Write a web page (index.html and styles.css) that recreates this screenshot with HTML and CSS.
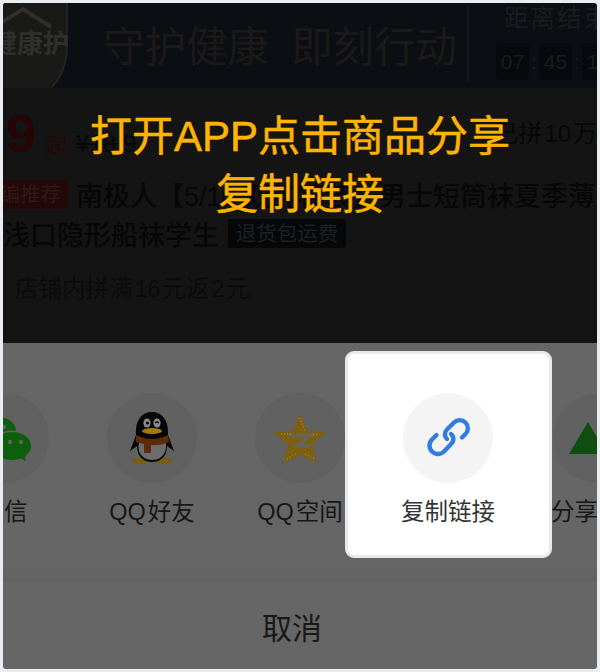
FILE: index.html
```html
<!DOCTYPE html>
<html lang="zh-CN">
<head>
    <meta charset="UTF-8">
    <meta name="viewport" content="width=device-width, initial-scale=1.0">
    <title>复制链接</title>
    <link rel="stylesheet" href="styles.css">
</head>
<body>

<div class="screen">
    <header class="banner">
        <div class="shield">
            <svg width="65" height="85" viewBox="0 0 65 85">
                <path d="M-10 0H64V45Q63 70 48 85H-10Z" fill="#191918"/>
                <path d="M-2 20L20 6L48 24" fill="none" stroke="#302f2c" stroke-width="4"/>
                <path d="M64 0V45Q63 70 48 85" fill="none" stroke="#232321" stroke-width="2"/>
            </svg>
            <span class="shield-text">健康护</span>
        </div>
        <div class="slogan">守护健康<span class="slogan-gap"></span>即刻行动</div>
        <div class="countdown">
            <div class="countdown-title">距离结束</div>
            <div class="countdown-time">
                <span class="time-box">07</span><span class="time-sep">:</span><span class="time-box">45</span><span class="time-sep">:</span><span class="time-box">16</span>
            </div>
        </div>
    </header>

    <section class="product">
        <div class="price-row">
            <span class="price">9</span>
            <span class="price-unit">起</span>
            <span class="price-old">¥18.9</span>
            <span class="sold">已拼&#8202;10&#8202;万</span>
        </div>
        <div class="title-row first">
            <span class="tag tag-red">编推荐</span>
            <span class="title-line">南极人【5/10 双纯棉装】男士短筒袜夏季薄</span>
        </div>
        <div class="title-row second">
            <span class="title-line">浅口隐形船袜学生</span>
            <span class="tag tag-dark">退货包运费</span>
        </div>
        <div class="promo">店铺内拼满&#8202;16&#8202;元返&#8202;2&#8202;元</div>
    </section>

    <section class="sheet">
        <div class="share-row">
            <div class="share-item">
                <div class="share-icon">
                    <svg width="60" height="50" viewBox="0 0 60 50">
                        <ellipse cx="24" cy="18" rx="18" ry="14" fill="#0d5f0d"/>
                        <ellipse cx="38" cy="33" rx="21" ry="15.5" fill="#616161"/>
                        <ellipse cx="38" cy="33" rx="19" ry="14" fill="#0d5f0d"/>
                        <path d="M44 44L52 48L50 40Z" fill="#0d5f0d"/>
                        <circle cx="36" cy="29" r="2.2" fill="#5c655c"/>
                        <circle cx="47" cy="29" r="2.2" fill="#5c655c"/>
                        <circle cx="30" cy="14" r="2.2" fill="#5c655c"/>
                    </svg>
                </div>
                <div class="share-label">微信</div>
            </div>
            <div class="share-item">
                <div class="share-icon">
                    <svg width="46" height="54" viewBox="0 0 46 54">
                        <ellipse cx="11" cy="50" rx="8" ry="3" fill="#7c5c10"/>
                        <ellipse cx="35" cy="50" rx="8" ry="3" fill="#7c5c10"/>
                        <path d="M7 24C6 8 14 1 23 1S40 8 39 24L45 40L38 35C38 45 32 51 23 51S8 45 8 35L1 40Z" fill="#060606"/>
                        <path d="M11 30H36C39 36 36 49 23 49C11 49 7 37 11 30Z" fill="#6c6c6c"/>
                        <ellipse cx="18" cy="12" rx="3.6" ry="4.6" fill="#8a8a8a"/>
                        <ellipse cx="28" cy="12" rx="3.6" ry="4.6" fill="#8a8a8a"/>
                        <circle cx="18.5" cy="12" r="1.6" fill="#060606"/>
                        <path d="M26 12Q28 10 30 12" fill="none" stroke="#060606" stroke-width="1.2"/>
                        <ellipse cx="23" cy="20" rx="10" ry="3" fill="#a6790f"/>
                        <path d="M7 24Q23 32 39 24L40 31Q30 35 22 34V42H15V33L7 31Z" fill="#5e2c0a"/>
                    </svg>
                </div>
                <div class="share-label">QQ&#8202;好友</div>
            </div>
            <div class="share-item">
                <div class="share-icon">
                    <svg width="54" height="50" viewBox="0 0 54 50">
                        <path d="M27 0L34 17L54 19L39 31L44 50L27 42L10 50L15 31L0 19L20 17Z" fill="#7d5f12"/>
                        <path d="M15 22H38L24 33H37" fill="none" stroke="#67645c" stroke-width="3.5"/>
                        <path d="M27 5L32 18M8 21H20M40 22L46 21M14 46L24 40M32 41L42 46" stroke="#ad8a1c" stroke-width="1.5" stroke-dasharray="1 2"/>
                    </svg>
                </div>
                <div class="share-label">QQ&#8202;空间</div>
            </div>
            <div class="share-item current">
                <div class="share-icon">
                    <svg width="46" height="46" viewBox="0 0 46 46" fill="none" stroke="#2f7de1" stroke-width="4.4" stroke-linecap="round">
                        <path d="M37 22.5l3.5-3.5a8 8 0 0 0-11.5-11.5l-7 7a6.5 6.5 0 0 0 0 9.5"/>
                        <path d="M26 19a6.5 6.5 0 0 1 0 10l-7 7.5a8 8 0 0 1-12-12l4.5-4.5"/>
                    </svg>
                </div>
                <div class="share-label">复制链接</div>
            </div>
            <div class="share-item last">
                <div class="share-icon">
                    <svg class="share-triangle" width="38" height="32" viewBox="0 0 38 32"><path d="M19 0L38 32H0Z" fill="#104d10"/></svg>
                </div>
                <div class="share-label">分享图片</div>
            </div>
        </div>
        <div class="cancel">取消</div>
    </section>

    <div class="callout">打开APP点击商品分享<br>复制链接</div>
</div>

</body>
</html>
```

FILE: styles.css
```css
body {
    margin: 0;
    padding: 3px;
    background-color: #e9edf2;
    font-family: "Liberation Sans", "Noto Sans CJK SC", sans-serif;
}

.screen {
    position: relative;
    height: 666px;
    overflow: hidden;
    border-radius: 3px;
    display: flex;
    flex-direction: column;
}

/* banner */
.banner {
    display: flex;
    height: 85px;
    flex-shrink: 0;
    background-color: #0b0e12;
}

.shield {
    position: relative;
    width: 65px;
    height: 85px;
    flex-shrink: 0;
}

.shield-text {
    position: absolute;
    top: 26px;
    left: -12px;
    font-size: 26px;
    line-height: 30px;
    font-weight: bold;
    white-space: nowrap;
    color: #2f2f2c;
}

.slogan {
    display: flex;
    align-items: center;
    width: 401px;
    flex-shrink: 0;
    padding-left: 35px;
    box-sizing: border-box;
    font-size: 41.5px;
    color: #1c1a18;
    white-space: nowrap;
    border-right: 2px solid #15171a;
    margin: 2px 0 6px;
}

.slogan-gap {
    width: 22px;
}

.countdown {
    padding: 1px 0 0 27px;
    white-space: nowrap;
}

.countdown-title {
    margin-left: 8px;
    font-size: 24.5px;
    line-height: 30px;
    letter-spacing: 2px;
    color: #1b1c1d;
}

.countdown-time {
    display: flex;
    align-items: center;
    margin-top: 9px;
}

.time-box {
    width: 33px;
    height: 37px;
    line-height: 37px;
    text-align: center;
    border-radius: 4px;
    font-size: 21px;
    color: #191b1e;
    background-color: #070a0d;
}

.time-sep {
    width: 10px;
    text-align: center;
    font-size: 21px;
    color: #191b1e;
}

/* product info */
.product {
    height: 255px;
    flex-shrink: 0;
    background-color: #141414;
    color: #070707;
}

.price-row {
    display: flex;
    align-items: baseline;
    height: 87px;
    padding-top: 15px;
    box-sizing: border-box;
    white-space: nowrap;
}

.price {
    margin-left: 3px;
    font-size: 54px;
    line-height: 60px;
    font-weight: bold;
    color: #260505;
}

.price-unit {
    margin-left: 10px;
    font-size: 22px;
    color: #260808;
}

.price-old {
    margin-left: 8px;
    font-size: 24px;
    color: #070707;
    text-decoration: line-through;
}

.sold {
    align-self: flex-start;
    margin-top: 16px;
    margin-left: auto;
    font-size: 24px;
    line-height: 30px;
    color: #070707;
}

.title-row {
    display: flex;
    align-items: center;
    height: 39px;
    font-size: 27px;
    font-weight: 500;
    white-space: nowrap;
}

.title-row.first {
    height: 38px;
}

.title-row.second {
    margin-top: 1px;
    gap: 9px;
}

.tag {
    height: 29px;
    line-height: 29px;
    border-radius: 3px;
    font-weight: normal;
    white-space: nowrap;
    flex-shrink: 0;
}

.tag-red {
    width: 58px;
    padding-right: 7px;
    margin-right: 8px;
    overflow: hidden;
    direction: rtl;
    font-size: 20.5px;
    background-color: #240808;
    color: #2f1919;
}

.tag-dark {
    width: 118px;
    text-align: center;
    font-size: 20.5px;
    background-color: #050709;
    color: #1f2021;
}

.promo {
    margin-top: 21px;
    padding-left: 12px;
    font-size: 23.5px;
    line-height: 30px;
    white-space: nowrap;
    color: #0b0b0b;
}

/* share sheet */
.sheet {
    flex: 1;
    background-color: #666;
    display: flex;
    flex-direction: column;
}

.share-row {
    display: flex;
    height: 239px;
    flex-shrink: 0;
    box-sizing: border-box;
    padding-top: 50px;
    margin-left: -73px;
    background: linear-gradient(#666 88%, #636363);
}

.share-item {
    position: relative;
    width: 148px;
    flex-shrink: 0;
    display: flex;
    flex-direction: column;
    align-items: center;
}

.share-item.last {
    margin-left: 2px;
}

.share-icon {
    position: relative;
    width: 90px;
    height: 90px;
    border-radius: 50%;
    background-color: #616161;
    display: flex;
    align-items: center;
    justify-content: center;
    overflow: hidden;
}

.share-triangle {
    margin-right: 20px;
}

.share-label {
    position: relative;
    margin-top: 14px;
    font-size: 23.5px;
    line-height: 30px;
    white-space: nowrap;
    color: #171717;
}

/* highlighted item sits on top of the dimmed sheet */
.share-item.current::before {
    content: "";
    position: absolute;
    top: -42px;
    left: -29px;
    width: 201px;
    height: 201px;
    background-color: #fff;
    border: 3px solid #e6e9ee;
    border-radius: 9px;
}

.share-item.current .share-icon {
    background-color: #f4f4f4;
}

.share-item.current .share-label {
    color: #333;
}

.cancel {
    flex: 1;
    padding-right: 16px;
    display: flex;
    align-items: center;
    justify-content: center;
    font-size: 30px;
    color: #191919;
}

/* tip text over the page */
.callout {
    position: absolute;
    top: 105px;
    left: 0;
    width: 594px;
    text-align: center;
    font-size: 42px;
    line-height: 58px;
    white-space: nowrap;
    color: #ffb400;
    -webkit-text-stroke: 0.5px #ffb400;
}
```
